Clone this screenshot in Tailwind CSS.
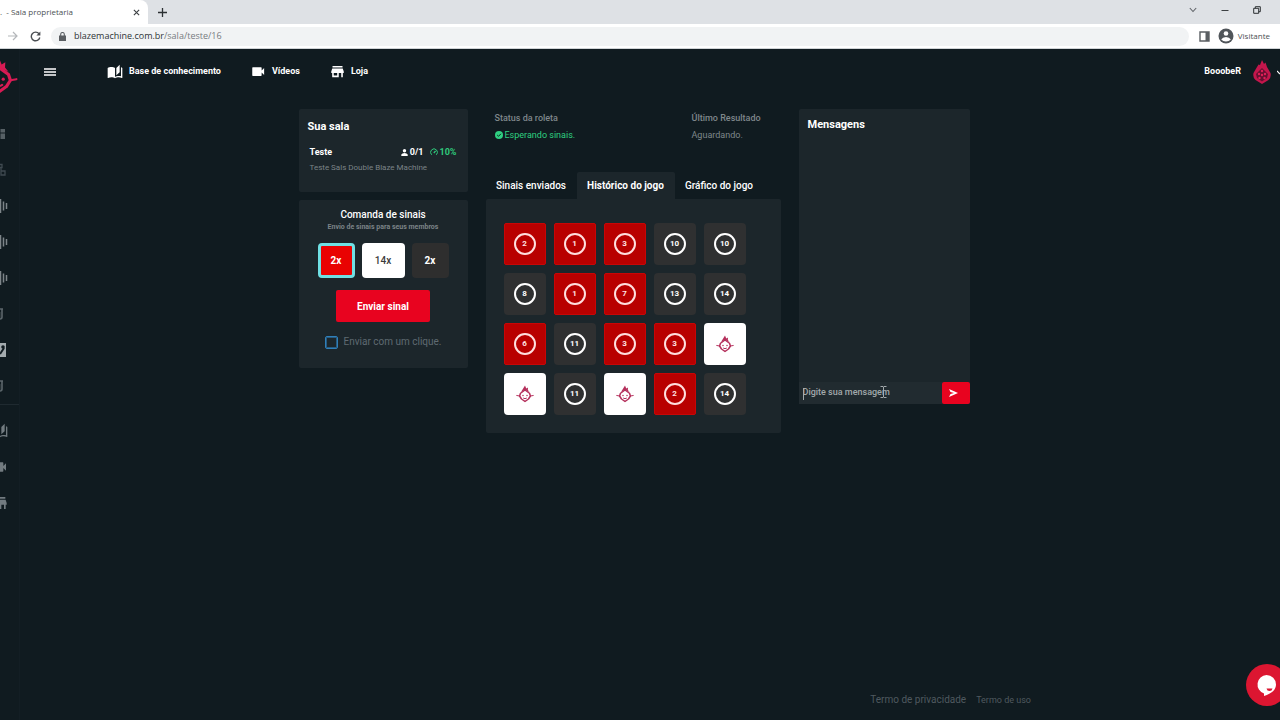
<!DOCTYPE html>
<html lang="pt-BR">
<head>
<meta charset="utf-8">
<meta name="viewport" content="width=device-width, initial-scale=1">
<title>Sala proprietaria</title>
<script src="https://cdn.jsdelivr.net/npm/@tailwindcss/browser@4"></script>
</head>
<body class="flex min-h-screen flex-col overflow-x-hidden bg-[#101b20] font-['Roboto',sans-serif] text-white">

<svg class="hidden" aria-hidden="true">
  <symbol id="book" viewBox="0 0 24 24"><path fill="currentColor" d="M19 1l-5 5v11l5-4.5V1zM1 6v14.65c0 .25.25.5.5.5.1 0 .15-.05.25-.05C3.1 20.45 5.05 20 6.5 20c1.95 0 4.05.4 5.5 1.5V6c-1.45-1.1-3.55-1.5-5.5-1.5S2.45 4.9 1 6zm22 13.5V6c-.6-.45-1.25-.75-2-1v13.5c-1.1-.35-2.3-.5-3.5-.5-1.7 0-4.15.65-5.5 1.5v2c1.35-.85 3.8-1.5 5.5-1.5 1.65 0 3.35.3 4.75 1.05.1.05.15.05.25.05.25 0 .5-.25.5-.5v-1.1z"/></symbol>
  <symbol id="video" viewBox="0 0 24 24"><path fill="currentColor" d="M17 10.500V6a1 1 0 0 0-1-1H3a1 1 0 0 0-1 1v12a1 1 0 0 0 1 1h13a1 1 0 0 0 1-1v-4.500l4 4V6.500z"/></symbol>
  <symbol id="store" viewBox="0 0 24 24"><path fill="currentColor" fill-rule="evenodd" d="M4 3h16v2.500H4zM3.600 7h16.800L22 12v2.500h-1.500V21H18v-6.500h-4V21H3.500v-6.500H2V12zM6 14.500v4h5.500v-4z"/></symbol>
  <symbol id="flameface" viewBox="0 0 36 36">
    <path fill="currentColor" d="M10 14L18 1l2.500 6L24 5l-.3 5 3.300 4-9-4z"/>
    <path fill="none" stroke="currentColor" stroke-width="3" stroke-linejoin="round" d="M18 10l-9 6.500-1.800 5.500L11 28l7 5 7-5 3.800-6-1.800-5.500z"/>
    <path fill="none" stroke="currentColor" stroke-width="2" stroke-linecap="round" d="M1.500 21l5.500 1M34.500 21l-5.500 1M15 26.500q3 2.200 6 0"/>
    <circle fill="currentColor" cx="14" cy="21" r="1.500"/><circle fill="currentColor" cx="22" cy="21" r="1.500"/>
  </symbol>
  <symbol id="wave" viewBox="0 0 16 16"><path stroke="currentColor" stroke-width="1.500" d="M1 6v4M4 4v8M8.500 1v14M11.500 3.500v9M14.500 5v6"/></symbol>
  <symbol id="cup" viewBox="0 0 16 16"><path fill="none" stroke="currentColor" stroke-width="1.600" d="M1 3h12M12 3v8q0 2-2 2H5q-2 0-2-2V3M9.500 6v6M6 5v6"/></symbol>
</svg>

<div class="flex h-6 items-stretch justify-between bg-[#dee1e5] font-['Open_Sans','Noto_Sans',sans-serif] text-[#3c4043]">
  <div class="flex">
    <div class="flex w-[148px] items-center justify-between rounded-tr-lg bg-white pr-2">
      <span class="text-[8px] text-[#4b4f53]">. &nbsp;- Sala proprietaria</span>
      <button aria-label="Fechar guia" class="flex"><svg class="size-[7px]" viewBox="0 0 8 8"><path stroke="#3c4043" stroke-width="1.300" d="M1 1l6 6M7 1L1 7"/></svg></button>
    </div>
    <button aria-label="Nova guia" class="ml-2.5 flex items-center"><svg class="size-[9px]" viewBox="0 0 9 9"><path stroke="#2c3033" stroke-width="1.300" d="M4.500 0v9M0 4.500h9"/></svg></button>
  </div>
  <div class="flex items-center gap-6 pr-[19px] pb-1">
    <button aria-label="Pesquisar guias"><svg class="size-2" viewBox="0 0 8 8" fill="none"><path stroke="#5f6368" stroke-width="1.100" d="M.8 2L4 5.500 7.200 2"/></svg></button>
    <button aria-label="Minimizar"><svg class="size-2" viewBox="0 0 8 8"><path stroke="#3c4043" d="M.5 4.500h7"/></svg></button>
    <button aria-label="Restaurar"><svg class="size-2" viewBox="0 0 8 8" fill="none"><path stroke="#2c3033" d="M.7 2.300h5v5h-5zM2.300 2.300V.7h5v5H5.700"/></svg></button>
  </div>
</div>

<div class="flex h-[25px] items-center border-b border-[#cfd3d6] bg-white pr-1 pl-2 font-['Open_Sans','Noto_Sans',sans-serif]">
  <button aria-label="Avançar"><svg class="size-2.5" viewBox="0 0 10 10" fill="none"><path stroke="#b4b7ba" stroke-width="1.200" d="M0 5h9M5 1l4 4-4 4"/></svg></button>
  <button aria-label="Recarregar" class="ml-3"><svg class="size-[11px]" viewBox="0 0 11 11"><path fill="none" stroke="#4a4e52" stroke-width="1.400" d="M9 2.800A4.300 4.300 0 1 0 9.800 6.500"/><path fill="#4a4e52" d="M10.400.5v4H6.400z"/></svg></button>
  <div class="ml-2.5 flex h-[19px] flex-1 items-center gap-2 rounded-full bg-[#f1f3f4] pl-2 text-[9px]">
    <svg class="h-[9px] w-[7px]" viewBox="0 0 7 9"><path fill="#5a5e62" d="M0 3.500h7V9H0z"/><path fill="none" stroke="#5a5e62" stroke-width="1.100" d="M1.700 4V2.300a1.800 1.800 0 0 1 3.600 0V4"/></svg>
    <span><span class="text-[#2f3337]">blazemachine.com.br</span><span class="text-[#777b80]">/sala/teste/16</span></span>
  </div>
  <button aria-label="Painel lateral" class="ml-2.5"><svg class="size-[11px]" viewBox="0 0 11 11"><path fill="none" stroke="#5a5e62" stroke-width="1.400" d="M1 1h9v9H1z"/><path fill="#5a5e62" d="M6.500 1H10v9H6.500z"/></svg></button>
  <button class="ml-2 flex h-[19px] items-center gap-1 rounded-full pr-1.5 text-[8px] text-[#4b4f53]">
    <svg class="size-4" viewBox="0 0 16 16"><circle cx="8" cy="8" r="7.500" fill="#50555a"/><circle cx="8" cy="5.500" r="2.300" fill="#fff"/><path fill="#fff" d="M3.200 11.500Q4.500 9 8 9t4.800 2.500Q11 13.500 8 13.500t-4.800-2z"/></svg>
    Visitante
  </button>
</div>

<div class="flex flex-1">
  <aside class="w-5 shrink-0 overflow-hidden border-r border-[#131e24] text-[#5c666b]">
    <svg class="mt-2 -ml-5 size-[38px] text-[#d81b54]"><use href="#flameface"/></svg>
    <nav class="mt-[21px] flex flex-col *:flex *:h-9 *:items-center" aria-label="Menu lateral">
      <a href="#" aria-label="Painel"><svg class="-ml-2 size-3.5" viewBox="0 0 14 14" fill="#566065"><path d="M1 2h5v5H1zM1 8h5v4H1zM8.500 2H13v3.500H8.500zM8.500 6.500H13V12H8.500z"/></svg></a>
      <a href="#" aria-label="Salas"><svg class="-ml-2 size-3.5" viewBox="0 0 14 14" fill="none" stroke="#3f4a50" stroke-width="1.300"><path d="M7 1.500h3v3H7zM9 4.500v3M9 8h4v4H9zM2 8h4v4H2z"/></svg></a>
      <a href="#" aria-label="Sinais 1" class="text-[#7d8589]"><svg class="-ml-2 size-4"><use href="#wave"/></svg></a>
      <a href="#" aria-label="Sinais 2" class="text-[#7d8589]"><svg class="-ml-2 size-4"><use href="#wave"/></svg></a>
      <a href="#" aria-label="Sinais 3" class="text-[#7d8589]"><svg class="-ml-2 size-4"><use href="#wave"/></svg></a>
      <a href="#" aria-label="Jogo 1"><svg class="-ml-2.5 size-4"><use href="#cup"/></svg></a>
      <a href="#" aria-label="Bônus"><svg class="-ml-2 size-3.5" viewBox="0 0 14 14"><path fill="#a3abae" d="M0 0h14v14H0z"/><circle cx="11" cy="4" r="1.800" fill="#101b20"/><path stroke="#101b20" stroke-width="2" d="M12 5L8 11"/></svg></a>
      <a href="#" aria-label="Jogo 2"><svg class="-ml-2.5 size-4"><use href="#cup"/></svg></a>
    </nav>
    <nav class="flex flex-col border-t border-[#1f2a30] pt-2 text-[#727b80] *:flex *:h-9 *:items-center" aria-label="Atalhos">
      <a href="#" aria-label="Base de conhecimento"><svg class="-ml-2 size-4"><use href="#book"/></svg></a>
      <a href="#" aria-label="Vídeos"><svg class="-ml-2 size-4"><use href="#video"/></svg></a>
      <a href="#" aria-label="Loja"><svg class="-ml-2 size-4"><use href="#store"/></svg></a>
    </nav>
  </aside>

  <div class="flex min-w-0 flex-1 flex-col">
    <header class="flex h-[45px] items-center justify-between pl-6 text-[9px] font-bold">
      <div class="flex items-center">
        <button aria-label="Abrir menu"><svg class="h-2 w-3" viewBox="0 0 12 8"><path stroke="#fff" stroke-width="1.500" d="M0 1h12M0 4h12M0 7h12"/></svg></button>
        <nav class="ml-[51px] flex items-center gap-[30px]" aria-label="Principal">
          <a href="#" class="flex items-center gap-1.5"><svg class="size-4"><use href="#book"/></svg>Base de conhecimento</a>
          <a href="#" class="flex items-center gap-1.5"><svg class="size-[15px]"><use href="#video"/></svg>Vídeos</a>
          <a href="#" class="flex items-center gap-1.5"><svg class="size-[15px]"><use href="#store"/></svg>Loja</a>
        </nav>
      </div>
      <button class="flex items-center gap-3">BooobeR
        <span class="flex items-center gap-1.5">
          <svg class="h-6 w-[18px]" viewBox="0 0 18 24"><path fill="#c4164c" d="M9 0l2 4 1.500-1.500L14 7l3.500 6q1 4-2 7L9 24l-6.500-4q-3-3-2-7L4 7l1.500-2.500L7 5z"/><path fill="#680f31" d="M9 8l6 6-1 4-5 3.500L4 18l-1-4z"/><g fill="#e01f58"><circle cx="9" cy="11" r="1.200"/><circle cx="6" cy="14" r="1.200"/><circle cx="12" cy="14" r="1.200"/><circle cx="9" cy="15" r="1.200"/><circle cx="6.500" cy="18" r="1.200"/><circle cx="11.500" cy="18" r="1.200"/></g></svg>
          <svg class="h-1.5 w-[3px]" viewBox="0 0 3 6"><path fill="none" stroke="#fff" stroke-width="1.200" d="M0 2l3 3"/></svg>
        </span>
      </button>
    </header>

    <main class="grid grid-cols-[169px_295px_171px] items-start justify-center gap-x-[18px] pt-[15px] pr-8">
      <div class="flex flex-col gap-2">
        <section class="h-[83px] rounded-xs bg-[#1c262b] px-[9px] pt-2.5">
          <h2 class="text-[11px] leading-4 font-bold">Sua sala</h2>
          <div class="mt-[11px] flex items-center justify-between px-0.5 text-[9px] leading-3 font-bold">
            <span>Teste</span>
            <span class="flex items-center gap-1.5">
              <span class="flex items-center gap-0.5"><svg class="size-[7px]" viewBox="0 0 7 7" fill="#fff"><circle cx="3.500" cy="1.800" r="1.700"/><path d="M.3 7V5.500Q1 4 3.500 4t3.200 1.500V7z"/></svg>0/1</span>
              <span class="flex items-center gap-0.5 text-[#2fc97c]"><svg class="size-2" viewBox="0 0 8 8" fill="none" stroke="currentColor"><path d="M1.700 6.800A3.400 3.400 0 1 1 6.300 6.800"/><path stroke-width="1.300" d="M3.800 5L5.600 2.800"/></svg>10%</span>
            </span>
          </div>
          <p class="mt-1 px-0.5 text-[8px] leading-3 text-[#7b8387]">Teste Sals Double Blaze Machine</p>
        </section>

        <section class="flex h-[168px] flex-col items-center rounded-xs bg-[#1c262b] pt-[7px]">
          <h2 class="text-[10px] leading-4 font-medium">Comanda de sinais</h2>
          <p class="text-[7px] leading-2 font-bold text-[#7b8387]">Envio de sinais para seus membros</p>
          <div class="mt-3 flex gap-[7px] text-[10px] font-bold">
            <button class="h-[35px] w-[37px] rounded-sm border-3 border-[#6fe0e4] bg-[#e90202]">2x</button>
            <button class="h-[35px] w-[43px] rounded-sm bg-white font-medium text-[#3a3a3a]">14x</button>
            <button class="h-[35px] w-[37px] rounded-sm bg-[#2e2e2e]">2x</button>
          </div>
          <button class="mt-3 h-8 w-[94px] rounded-xs bg-[#e8031f] text-[10px] font-bold">Enviar sinal</button>
          <label class="mt-3 flex items-center gap-1.5 text-[10px] leading-4 text-[#5f6a72]">
            <input type="checkbox" class="size-[13px] appearance-none rounded-xs border border-[#2f7fba] ring-1 ring-[#2f7fba]/60 ring-inset">Enviar com um clique.
          </label>
        </section>
      </div>

      <div>
        <div class="flex px-2 pt-[3px] text-[9px] leading-3 text-[#7f878b]">
          <div class="w-[198px] pl-px">
            <h3 class="font-medium">Status da roleta</h3>
            <p class="mt-[5px] flex items-center gap-0.5 text-[#2fd081]"><svg class="size-2" viewBox="0 0 8 8"><circle cx="4" cy="4" r="4" fill="#2fd081"/><path fill="none" stroke="#101b20" d="M2.200 4l1.300 1.300 2.400-2.500"/></svg>Esperando sinais.</p>
          </div>
          <div>
            <h3 class="font-medium">Último Resultado</h3>
            <p class="mt-[5px]">Aguardando.</p>
          </div>
        </div>

        <div class="mt-[31px] flex h-[27px] text-[10px] font-medium" role="tablist">
          <button role="tab" class="w-[91px]">Sinais enviados</button>
          <button role="tab" aria-selected="true" class="w-[98px] rounded-t-xs bg-[#1c262b] font-bold">Histórico do jogo</button>
          <button role="tab" class="w-[89px]">Gráfico do jogo</button>
        </div>
        <div id="history" role="tabpanel" class="grid grid-cols-[repeat(5,42px)] gap-2 rounded-xs bg-[#1c262b] px-[18px] pt-6 pb-[18px]"></div>
      </div>

      <section class="flex h-[295px] flex-col rounded-xs bg-[#1c262b]">
        <h2 class="flex-1 px-[9px] pt-2 text-[11px] leading-4 font-bold">Mensagens</h2>
        <form class="relative flex h-[22px]">
          <input type="text" aria-label="Mensagem" placeholder="Digite sua mensagem" class="min-w-0 flex-1 bg-[#212b30] px-1 text-[9px] font-medium outline-none placeholder:text-[#a2a9ac]">
          <span class="absolute top-1.5 left-1 h-3 w-px bg-[#a2a9ac]"></span>
          <svg class="absolute top-1 left-[81px] h-3 w-[7px]" viewBox="0 0 7 12"><path fill="none" stroke="#a2a9ac" d="M.5.500H3l.5.500.5-.500h2.500M3.500 1v10M.5 11.500H3l.5-.500.5.500h2.500"/></svg>
          <button type="button" aria-label="Enviar mensagem" class="flex w-7 items-center justify-center rounded-xs bg-[#e8031f] pr-1"><svg class="h-2 w-[9px]" viewBox="0 0 9 8"><path fill="#fff" d="M0 0l9 4-9 4 1.500-3L5 4 1.500 3z"/></svg></button>
        </form>
      </section>
    </main>

    <footer class="mt-auto flex items-center justify-end gap-2.5 pr-[249px] pb-3 text-[9px] leading-4 text-[#4f595f]">
      <a href="#" class="text-[10px]">Termo de privacidade</a>
      <a href="#">Termo de uso</a>
    </footer>
  </div>
</div>

<button aria-label="Abrir chat" class="fixed -right-2 bottom-3.5 flex size-[42px] items-center justify-center rounded-full bg-[#dc1631]">
  <svg class="size-[22px]" viewBox="0 0 22 22"><path fill="#fff" d="M10.500 1a9.500 9.500 0 0 1 9.500 9.500c0 5-4 9-12 11.500v-2.500A9.500 9.500 0 0 1 10.500 1z"/><path fill="#dc1631" d="M10.500 14.500h6q-.5 2.500-3 2.500t-3-2.500z"/></svg>
</button>

<script>
  const tile = {
    red: 'flex h-[42px] items-center justify-center rounded-xs border border-[#c80606] bg-[#b80000]',
    black: 'flex h-[42px] items-center justify-center rounded-sm bg-[#2f3031]',
    white: 'flex h-[42px] items-center justify-center rounded-sm bg-white text-[#b5305c]'
  };
  const ring = {
    red: 'flex size-[22px] items-center justify-center rounded-full border-2 border-[#ffdede] text-[8px] leading-none font-bold text-[#ffe4e4]',
    black: 'flex size-[22px] items-center justify-center rounded-full border-2 border-white text-[8px] leading-none font-bold text-white'
  };
  const rounds = [2, 1, 3, 10, 10, 8, 1, 7, 13, 14, 6, 11, 3, 3, 0, 0, 11, 0, 2, 14];
  document.getElementById('history').innerHTML = rounds.map(n => {
    const c = n === 0 ? 'white' : n < 8 ? 'red' : 'black';
    return '<div class="' + tile[c] + '">' + (n === 0
      ? '<svg class="size-[18px]"><use href="#flameface"/></svg>'
      : '<span class="' + ring[c] + '">' + n + '</span>') + '</div>';
  }).join('');
</script>
</body>
</html>
